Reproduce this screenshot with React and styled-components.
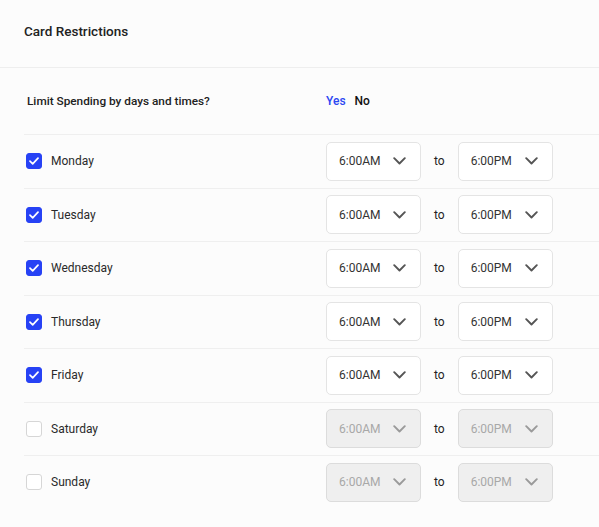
import styled, { createGlobalStyle } from 'styled-components'

const days = [
  { name: 'Monday', on: true },
  { name: 'Tuesday', on: true },
  { name: 'Wednesday', on: true },
  { name: 'Thursday', on: true },
  { name: 'Friday', on: true },
  { name: 'Saturday', on: false },
  { name: 'Sunday', on: false },
]

const Global = createGlobalStyle`
body {
  margin: 0;
  background: #fcfcfc;
  font-family: Roboto, "Liberation Sans", sans-serif;
  color: #222;
}
`

const Chevron = () => (
  <svg width="13" height="8" viewBox="0 0 13 8" fill="none">
    <path d="M1.2 1.2 L6.5 6.5 L11.8 1.2" stroke="currentColor" strokeWidth="1.9" strokeLinecap="round" strokeLinejoin="round" />
  </svg>
)

const Check = () => (
  <svg width="10" height="8" viewBox="0 0 10 8" fill="none">
    <path d="M1 4.2 L3.7 6.8 L9 1.2" stroke="#fff" strokeWidth="1.7" strokeLinecap="round" strokeLinejoin="round" />
  </svg>
)

const TimeSelect = ({ value, disabled }) => (
  <Select disabled={disabled}>
    <SelectText>{value}</SelectText>
    <Chevron />
  </Select>
)

const App = () => {
  return (
    <Wrapper>
      <Global />
      <Header>Card Restrictions</Header>
      <Content>
        <QuestionRow>
          <Question>Limit Spending by days and times?</Question>
          <Toggle>
            <Option active>Yes</Option>
            <Option>No</Option>
          </Toggle>
        </QuestionRow>
        {days.map(day => (
          <DayRow key={day.name}>
            <DayLabel>
              <Box checked={day.on}>{day.on && <Check />}</Box>
              {day.name}
            </DayLabel>
            <Times>
              <TimeSelect value="6:00AM" disabled={!day.on} />
              <To>to</To>
              <TimeSelect value="6:00PM" disabled={!day.on} />
            </Times>
          </DayRow>
        ))}
      </Content>
    </Wrapper>
  )
}

const Wrapper = styled.div`
width: 599px;
min-height: 527px;
`
const Header = styled.div`
height: 68px;
box-sizing: border-box;
display: flex;
align-items: center;
padding: 0 24px 6px;
font-size: 13.5px;
font-weight: 500;
border-bottom: 1px solid #eeeeee;
`
const Content = styled.div`
padding-left: 24px;
`
const QuestionRow = styled.div`
height: 66px;
display: grid;
grid-template-columns: 302px auto;
align-items: center;
`
const Question = styled.div`
font-size: 11.8px;
font-weight: 500;
padding-left: 3px;
`
const Toggle = styled.div`
display: flex;
gap: 9px;
font-size: 12px;
font-weight: 500;
`
const Option = styled.span`
color: ${p => (p.active ? '#2b47f2' : '#111')};
`
const DayRow = styled.div`
height: 53.5px;
box-sizing: border-box;
border-top: 1px solid #efefef;
display: grid;
grid-template-columns: 302px auto;
align-items: center;
`
const DayLabel = styled.div`
display: flex;
align-items: center;
gap: 9px;
padding-left: 2px;
font-size: 12px;
color: #2a2a2a;
`
const Box = styled.span`
width: 16px;
height: 16px;
box-sizing: border-box;
border-radius: 3px;
display: grid;
place-items: center;
background: ${p => (p.checked ? '#2742f5' : '#fff')};
border: 1px solid ${p => (p.checked ? '#2742f5' : '#d6d6d6')};
`
const Times = styled.div`
display: flex;
align-items: center;
gap: 13px;
`
const Select = styled.div`
width: 95px;
height: 39px;
box-sizing: border-box;
border-radius: 5px;
border: 1px solid ${p => (p.disabled ? '#dcdcdc' : '#e4e4e4')};
background: ${p => (p.disabled ? '#efefef' : '#fff')};
color: ${p => (p.disabled ? '#a8a8a8' : '#333')};
display: flex;
align-items: center;
padding: 0 14px 0 12px;
justify-content: space-between;
svg {
  color: ${p => (p.disabled ? '#9a9a9a' : '#555')};
}
`
const SelectText = styled.span`
width: 41px;
white-space: nowrap;
font-size: 12px;
`
const To = styled.span`
font-size: 12px;
color: #222;
`

export default App
